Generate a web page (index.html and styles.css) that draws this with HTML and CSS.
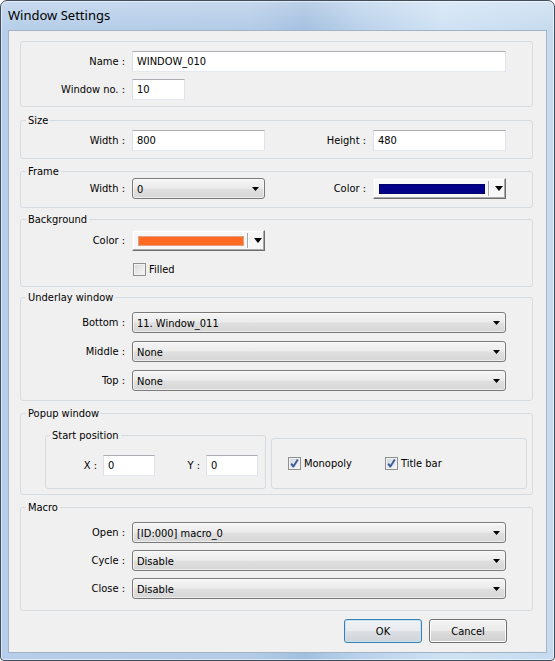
FILE: index.html
```html
<!DOCTYPE html>
<html>
<head>
<meta charset="utf-8">
<title>Window Settings</title>
<link rel="stylesheet" href="styles.css">
</head>
<body>
<div class="window">
  <div class="titlebar"><span class="title">Window Settings</span></div>
  <div class="client">

    <fieldset class="grp g-name">
      <div class="row"><span class="lbl">Name :</span><div class="input w-full">WINDOW_010</div></div>
      <div class="row gap7"><span class="lbl">Window no. :</span><div class="input w-no">10</div></div>
    </fieldset>

    <fieldset class="grp g-size">
      <legend>Size</legend>
      <div class="row">
        <span class="lbl">Width :</span><div class="input w-half">800</div>
        <span class="lbl lbl2">Height :</span><div class="input w-half">480</div>
      </div>
    </fieldset>

    <fieldset class="grp g-frame">
      <legend>Frame</legend>
      <div class="row">
        <span class="lbl">Width :</span>
        <div class="select w-half"><span>0</span><svg class="arr" width="7" height="4" viewBox="0 0 7 4"><path d="M0 0h7L3.5 4z"/></svg></div>
        <span class="lbl lbl2">Color :</span>
        <div class="colorpick w-half"><span class="swatch navy"></span><span class="sep"></span><svg class="arr2" width="8" height="5" viewBox="0 0 8 5"><path d="M0 0h8L4 5z"/></svg></div>
      </div>
    </fieldset>

    <fieldset class="grp g-bg">
      <legend>Background</legend>
      <div class="row">
        <span class="lbl">Color :</span>
        <div class="colorpick w-half"><span class="swatch orange"></span><span class="sep"></span><svg class="arr2" width="8" height="5" viewBox="0 0 8 5"><path d="M0 0h8L4 5z"/></svg></div>
      </div>
      <div class="row cbrow">
        <span class="lbl"></span>
        <label class="check"><span class="cb"></span>Filled</label>
      </div>
    </fieldset>

    <fieldset class="grp g-under">
      <legend>Underlay window</legend>
      <div class="row"><span class="lbl">Bottom :</span><div class="select w-full"><span>11. Window_011</span><svg class="arr" width="7" height="4" viewBox="0 0 7 4"><path d="M0 0h7L3.5 4z"/></svg></div></div>
      <div class="row gap8"><span class="lbl">Middle :</span><div class="select w-full"><span>None</span><svg class="arr" width="7" height="4" viewBox="0 0 7 4"><path d="M0 0h7L3.5 4z"/></svg></div></div>
      <div class="row gap8"><span class="lbl">Top :</span><div class="select w-full"><span>None</span><svg class="arr" width="7" height="4" viewBox="0 0 7 4"><path d="M0 0h7L3.5 4z"/></svg></div></div>
    </fieldset>

    <fieldset class="grp g-popup">
      <legend>Popup window</legend>
      <div class="popup-row">
        <fieldset class="grp g-start">
          <legend>Start position</legend>
          <div class="row">
            <span class="lbl lx">X :</span><div class="input w-xy">0</div>
            <span class="lbl ly">Y :</span><div class="input w-xy">0</div>
          </div>
        </fieldset>
        <div class="grp g-opts">
          <label class="check mono"><span class="cb checked"><svg width="11" height="11" viewBox="0 0 11 11"><path d="M2.2 5.6 L4.4 8.6 L8.8 1.6" fill="none" stroke="#3d5a98" stroke-width="1.9" stroke-linejoin="round"/></svg></span>Monopoly</label>
          <label class="check"><span class="cb checked"><svg width="11" height="11" viewBox="0 0 11 11"><path d="M2.2 5.6 L4.4 8.6 L8.8 1.6" fill="none" stroke="#3d5a98" stroke-width="1.9" stroke-linejoin="round"/></svg></span>Title bar</label>
        </div>
      </div>
    </fieldset>

    <fieldset class="grp g-macro">
      <legend>Macro</legend>
      <div class="row"><span class="lbl">Open :</span><div class="select w-full"><span>[ID:000] macro_0</span><svg class="arr" width="7" height="4" viewBox="0 0 7 4"><path d="M0 0h7L3.5 4z"/></svg></div></div>
      <div class="row gap7"><span class="lbl">Cycle :</span><div class="select w-full"><span>Disable</span><svg class="arr" width="7" height="4" viewBox="0 0 7 4"><path d="M0 0h7L3.5 4z"/></svg></div></div>
      <div class="row gap7"><span class="lbl">Close :</span><div class="select w-full"><span>Disable</span><svg class="arr" width="7" height="4" viewBox="0 0 7 4"><path d="M0 0h7L3.5 4z"/></svg></div></div>
    </fieldset>

    <div class="buttons">
      <button class="btn default">OK</button>
      <button class="btn">Cancel</button>
    </div>
  </div>
</div>
</body>
</html>
```

FILE: styles.css
```css
* { box-sizing: border-box; }
html, body { margin: 0; padding: 0; background: #ffffff; }
body {
  width: 555px;
  height: 661px;
  font-family: "DejaVu Sans Condensed", "DejaVu Sans", "Liberation Sans", sans-serif;
  font-size: 11px;
  color: #000;
}

.window {
  width: 555px;
  height: 661px;
  border: 1px solid #3f4d5c;
  border-radius: 7px 7px 4px 4px;
  background:
    linear-gradient(to bottom, rgba(255,255,255,0.25), rgba(255,255,255,0) 30px),
    linear-gradient(to right, #b6cee9 0%, #b3cbe7 45%, #a4c0e0 55%, #b8d0ea 64%, #cfe2f4 80%, #c6dbef 100%);
  padding: 0 7px 7px 7px;
  display: flex;
  flex-direction: column;
  box-shadow: inset 0 0 0 1px rgba(255,255,255,0.55);
}

.titlebar {
  height: 29px;
  flex: none;
  display: flex;
  align-items: center;
  padding-bottom: 2px;
}
.title {
  font-family: "Noto Sans", "Open Sans", sans-serif;
  font-size: 13px;
  color: #000;
}

.client {
  flex: 1;
  background: #f0f0f0;
  border: 1px solid #a2b3c6;
  padding: 10px 13px 0 11px;
}

.grp {
  margin: 0;
  border: 1px solid #d6dbe0;
  border-radius: 3px;
  padding: 0;
  min-width: 0;
}
.grp legend {
  margin-left: 5px;
  padding: 0 2px;
  line-height: 13px;
  font-size: 11px;
}

.row {
  display: flex;
  align-items: center;
}
.gap7 { margin-top: 7px; }
.gap8 { margin-top: 8px; }

.lbl {
  width: 111px;
  padding-right: 7px;
  text-align: right;
  flex: none;
  white-space: nowrap;
}
.lbl2 { width: 108px; }

.input {
  height: 21px;
  background: #fff;
  border: 1px solid;
  border-color: #abadb3 #e2e3ea #e3e9ef #dbdfe6;
  padding: 0 4px;
  display: flex;
  align-items: center;
  flex: none;
}
.w-full { width: 374px; }
.w-half { width: 133px; }
.w-no { width: 53px; }
.w-xy { width: 52px; }

.select {
  height: 21px;
  border: 1px solid #7a7a7a;
  border-radius: 3px;
  background: linear-gradient(to bottom, #f5f5f5 0%, #ececec 45%, #dfdfdf 55%, #d6d6d6 100%);
  box-shadow: inset 0 0 0 1px rgba(255,255,255,0.55);
  padding: 1px 5px 0 4px;
  display: flex;
  align-items: center;
  justify-content: space-between;
  flex: none;
}
.arr { flex: none; margin-top: 0; }
.arr path, .arr2 path { fill: #000; }

.colorpick {
  height: 21px;
  border: 1px solid;
  border-color: #f4f4f4 #6e6e6e #6e6e6e #f4f4f4;
  background: #f7f7f7;
  box-shadow: inset -1px -1px 0 #a9a9a9, inset 1px 1px 0 #ffffff;
  display: flex;
  align-items: center;
  padding: 0 6px 0 5px;
  flex: none;
}
.swatch {
  width: 106px;
  height: 10px;
  border: 1px solid #a0a0a0;
  flex: none;
}
.navy { background: #00008b; border-color: #00006a; }
.orange { background: #ff6a22; border-color: #e0a080; }
.sep {
  width: 1px;
  height: 15px;
  background: #a8a8a8;
  box-shadow: 1px 0 0 #fff;
  margin-left: 3px;
  flex: none;
}
.arr2 { margin-left: 6px; flex: none; }

.check {
  display: flex;
  align-items: center;
  white-space: nowrap;
}
.cb {
  width: 13px;
  height: 13px;
  border: 1px solid #8e8f8f;
  background: linear-gradient(135deg, #d9d9d9, #f8f8f8);
  box-shadow: inset 0 0 0 1px #f2f2f2;
  margin-right: 3px;
  display: flex;
  align-items: center;
  justify-content: center;
  flex: none;
}
.cb.checked { background: linear-gradient(135deg, #cfd6e0, #f5f7fa); }
.cb svg { display: block; }

.cbrow { margin-top: 11px; height: 14px; padding-left: 1px; }

/* group geometry */
.g-name { padding: 9px 0 6px 0; }
.g-size { margin-top: 7px; padding: 3px 0 7px 0; }
.g-frame { margin-top: 6px; padding: 0 0 8px 0; }
.g-bg { margin-top: 5px; padding: 4px 0 10px 0; }
.g-under { margin-top: 4px; padding: 8px 0 9px 0; }
.g-popup { margin-top: 6px; padding: 9px 5px 5px 24px; }
.g-popup > legend { margin-left: -19px; }
.g-macro { margin-top: 6px; padding: 8px 0 11px 0; }

.popup-row {
  display: flex;
  align-items: flex-end;
  gap: 5px;
}
.g-start {
  width: 221px;
  flex: none;
  padding: 13px 0 12px 0;
}
.g-start legend { margin-left: 4px; }
.lx { width: 57px; padding-right: 6px; }
.ly { width: 51px; padding-right: 6px; }

.g-opts {
  flex: 1;
  height: 51px;
  display: flex;
  align-items: center;
  padding-left: 16px;
}
.mono { width: 97px; }

.buttons {
  display: flex;
  justify-content: flex-end;
  gap: 7px;
  margin-top: 8px;
  padding-right: 26px;
}
.btn {
  width: 78px;
  height: 24px;
  border: 1px solid #707070;
  border-radius: 3px;
  background: linear-gradient(to bottom, #f2f2f2 0%, #ebebeb 50%, #dddddd 51%, #cfcfcf 100%);
  box-shadow: inset 0 0 0 1px #fbfbfb;
  font-family: inherit;
  font-size: 11px;
  color: #000;
  padding: 0;
}
.btn.default {
  border-color: #3c7fb1;
  box-shadow: inset 0 0 0 1px #c2e4f6;
  background: linear-gradient(to bottom, #f0f2f4 0%, #e8ebee 50%, #dcdfe3 51%, #d0d4d8 100%);
}
```
